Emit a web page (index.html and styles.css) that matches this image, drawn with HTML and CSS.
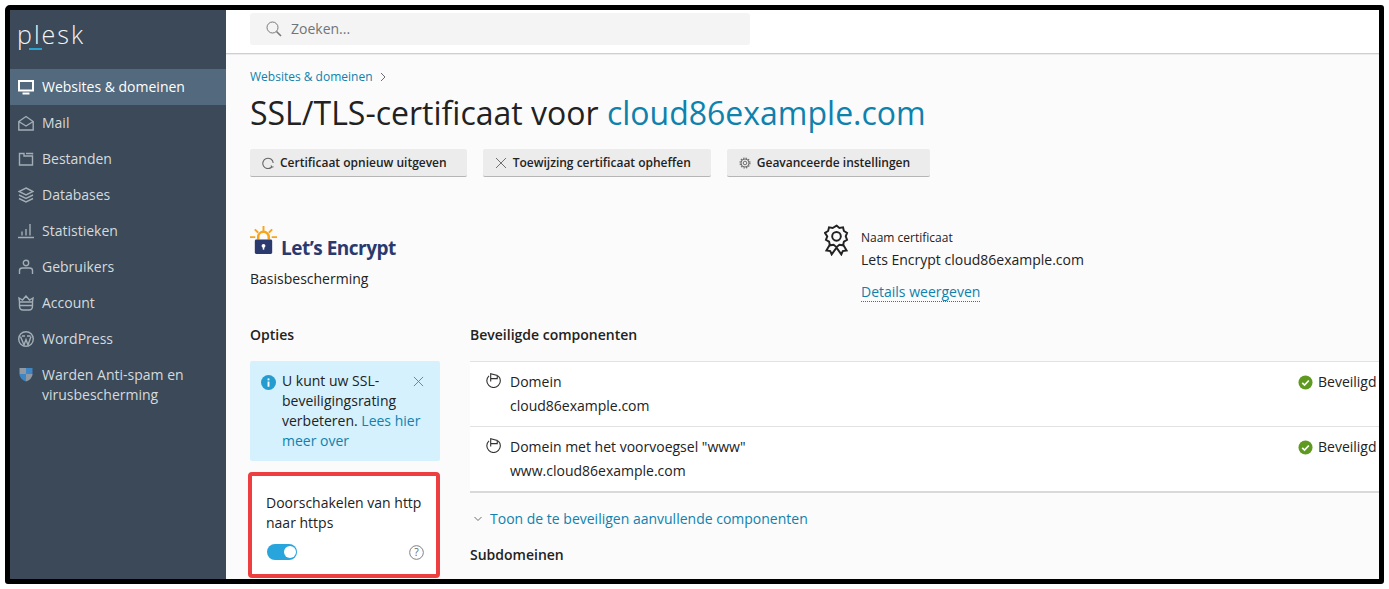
FILE: index.html
```html
<!DOCTYPE html>
<html lang="nl">
<head>
<meta charset="utf-8">
<title>SSL/TLS-certificaat</title>
<link rel="stylesheet" href="styles.css">
</head>
<body>
<div class="frame">
  <aside class="sidebar">
    <div class="logo"><span class="logo-text">plesk</span><span class="logo-bar"></span></div>
    <nav class="nav">
      <a class="nav-item active"><svg class="nav-icon" viewBox="0 0 16 16" fill="none" stroke="currentColor"><rect x="1" y="2" width="14" height="9.5" stroke-width="2"/><path d="M4.500 14.500h7" stroke-width="2"/></svg>Websites &amp; domeinen</a>
      <a class="nav-item"><svg class="nav-icon" viewBox="0 0 16 16" fill="none" stroke="currentColor"><path d="M.8 6.500 8 1.500l7.200 5V15H.8zM.8 6.500 8 11l7.200-4.500"/></svg>Mail</a>
      <a class="nav-item"><svg class="nav-icon" viewBox="0 0 16 16" fill="none" stroke="currentColor"><path d="M1.500 2.500h4.500v2.500h8.500v9h-13zM8 2.500h6.500v1"/></svg>Bestanden</a>
      <a class="nav-item"><svg class="nav-icon" viewBox="0 0 16 16" fill="none" stroke="currentColor"><path d="M8 1 15 4.500 8 8 1 4.500zM1 8l7 3.500L15 8M1 11.500 8 15l7-3.500"/></svg>Databases</a>
      <a class="nav-item"><svg class="nav-icon" viewBox="0 0 16 16" fill="none" stroke="currentColor"><path d="M0 14.500h16M4 12.500V8.500M8 12.500V6M12 12.500V1"/></svg>Statistieken</a>
      <a class="nav-item"><svg class="nav-icon" viewBox="0 0 16 16" fill="none" stroke="currentColor"><circle cx="8" cy="4" r="2.700"/><path d="M1.500 15v-3.500q0-2.500 3-2.500h7q3 0 3 2.500V15"/></svg>Gebruikers</a>
      <a class="nav-item"><svg class="nav-icon" viewBox="0 0 16 16" fill="none" stroke="currentColor"><path d="M1.500 7 1 3l3.500 2L8 1l3.500 4L15 3l-.5 4M1.500 7h13v4q0 4-3.500 4H5q-3.500 0-3.500-4zM1.500 10.500h13"/></svg>Account</a>
      <a class="nav-item"><svg class="nav-icon" viewBox="0 0 16 16" fill="none" stroke="currentColor"><circle cx="8" cy="8" r="7.300"/><path d="M2.500 5.500 6 14l2-5.500L10 14l3-8.500M4 5h3M9 5h3.500"/></svg>WordPress</a>
      <a class="nav-item"><svg class="nav-icon shield" viewBox="0 0 16 16"><path d="M1.500 2h6.500v6H1.500z" fill="#8f99a3"/><path d="M8 2h6.500v6H8z" fill="#3f86c6"/><path d="M1.500 8H8v7.500Q3 14 1.500 9z" fill="#3f86c6"/><path d="M8 8h6.500V9Q13 14 8 15.500z" fill="#8f99a3"/></svg><span>Warden Anti-spam en virusbescherming</span></a>
    </nav>
  </aside>
  <div class="content">
    <header class="topbar">
      <div class="search">
        <svg class="search-icon" viewBox="0 0 16 16" fill="none" stroke="#77797c"><circle cx="6.500" cy="6.500" r="5.500"/><path d="m10.500 10.500 4.500 4.500" stroke-width="1.600"/></svg>
        <span>Zoeken...</span>
      </div>
    </header>
    <main class="main">
      <div class="crumb"><a class="link">Websites &amp; domeinen</a><svg class="crumb-arrow" viewBox="0 0 8 10" fill="none" stroke="#6b6f73"><path d="m2 1 4 4-4 4"/></svg></div>
      <h1 class="title">SSL/TLS-certificaat voor <a class="link">cloud86example.com</a></h1>
      <div class="toolbar">
        <button class="btn"><svg class="btn-icon" viewBox="0 0 12 12" fill="none" stroke="#666"><path d="M9.800 10A5.200 5.200 0 1 1 11.200 6M9 8.500l.8 1.700 1.700-.4" stroke-width="1.100"/></svg>Certificaat opnieuw uitgeven</button>
        <button class="btn"><svg class="btn-icon" viewBox="0 0 12 12" fill="none" stroke="#707070"><path d="m1 1 10 10M11 1 1 11"/></svg>Toewijzing certificaat opheffen</button>
        <button class="btn"><svg class="btn-icon" viewBox="0 0 12 12" fill="none" stroke="#707070"><circle cx="6" cy="6" r="1.800"/><circle cx="6" cy="6" r="4"/><circle cx="6" cy="6" r="4.900" stroke-width="1.300" stroke-dasharray="1.400 1.170"/></svg>Geavanceerde instellingen</button>
      </div>
      <section class="cert">
        <div class="cert-left">
          <div class="le-logo">
            <svg class="le-icon" viewBox="0 0 28 30"><g stroke="#f9a51c" stroke-width="2" fill="none"><path d="M14 0v6M5 3.500l3.500 3.500M23 3.500 19.500 7M0 11.500h5.500M22.500 11.500H28"/><path d="M8.500 14v-2.500a5.500 5.500 0 0 1 11 0V14" stroke-width="2.600"/></g><rect x="5" y="14" width="18" height="15" rx="1.500" fill="#2a3a6e"/><circle cx="14" cy="20.500" r="2" fill="#fff"/><path d="M13.200 21h1.600v3.500h-1.600z" fill="#fff"/></svg>
            <span class="le-text">Let’s Encrypt</span>
          </div>
          <div class="le-sub">Basisbescherming</div>
        </div>
        <div class="cert-right">
          <svg class="award" viewBox="0 0 26 32" fill="none" stroke="#222" stroke-width="2"><path d="m13 1 3 2.500 3.800-.6.900 3.700 3.300 2-1.400 3.600 1.400 3.600-3.300 2-.9 3.700-3.800-.6-3 2.500-3-2.500-3.800.6-.9-3.700-3.300-2 1.400-3.600L1 8.600l3.300-2 .9-3.700 3.800.6z"/><circle cx="13" cy="12.200" r="4.500"/><path d="m6 21-3.500 6 4 .5L8 31l5-7 5 7 1.500-3.500 4-.5L20 21"/></svg>
          <div class="cert-info">
            <div class="cert-label">Naam certificaat</div>
            <div class="cert-name">Lets Encrypt cloud86example.com</div>
            <a class="link details">Details weergeven</a>
          </div>
        </div>
      </section>
      <section class="columns">
        <div class="col-left">
          <h2 class="heading">Opties</h2>
          <div class="notice">
            <svg class="info-icon" viewBox="0 0 16 16"><circle cx="8" cy="8" r="8" fill="#259ccf"/><rect x="7" y="7" width="2" height="5.500" fill="#fff"/><rect x="7" y="3.700" width="2" height="2" fill="#fff"/></svg>
            <div class="notice-text">U kunt uw SSL-beveiligingsrating verbeteren. <a class="link">Lees hier meer over</a></div>
            <svg class="notice-close" viewBox="0 0 12 12" fill="none" stroke="#707a80"><path d="m1 1 10 10M11 1 1 11"/></svg>
          </div>
          <div class="redirect">
            <div class="redirect-text">Doorschakelen van http naar https</div>
            <div class="redirect-row">
              <span class="toggle"><span class="knob"></span></span>
              <svg class="help" viewBox="0 0 16 16" fill="none" stroke="#77797c"><circle cx="8" cy="8" r="7.300"/><text x="8" y="11.500" class="help-mark">?</text></svg>
            </div>
          </div>
        </div>
        <div class="col-right">
          <h2 class="heading">Beveiligde componenten</h2>
          <div class="table">
            <div class="row">
              <svg class="flag" viewBox="0 0 16 16" fill="none" stroke="#333" stroke-width="1.200"><path d="M3.200 3A7.200 7.200 0 1 0 13 3M5 9V.8L12 2.500v3.500H5"/></svg>
              <div class="row-main"><div>Domein</div><div>cloud86example.com</div></div>
              <div class="status"><svg class="check" viewBox="0 0 16 16"><circle cx="8" cy="8" r="7.500" fill="#5d9a1f"/><path d="m4.500 8.300 2.500 2.400 4.500-4.800" fill="none" stroke="#fff" stroke-width="1.800"/></svg>Beveiligd</div>
            </div>
            <div class="row">
              <svg class="flag" viewBox="0 0 16 16" fill="none" stroke="#333" stroke-width="1.200"><path d="M3.200 3A7.200 7.200 0 1 0 13 3M5 9V.8L12 2.500v3.500H5"/></svg>
              <div class="row-main"><div>Domein met het voorvoegsel "www"</div><div>www.cloud86example.com</div></div>
              <div class="status"><svg class="check" viewBox="0 0 16 16"><circle cx="8" cy="8" r="7.500" fill="#5d9a1f"/><path d="m4.500 8.300 2.500 2.400 4.500-4.800" fill="none" stroke="#fff" stroke-width="1.800"/></svg>Beveiligd</div>
            </div>
          </div>
          <div class="more"><svg class="more-arrow" viewBox="0 0 8 6" fill="none" stroke="#6b6f73"><path d="m.5 1 3.500 3.500L7.500 1"/></svg><a class="link">Toon de te beveiligen aanvullende componenten</a></div>
          <h2 class="heading sub">Subdomeinen</h2>
        </div>
      </section>
    </main>
  </div>
</div>
</body>
</html>
```
FILE: styles.css
```css
* { box-sizing: border-box; }
html, body { margin: 0; height: 100%; }
body {
  background: #fff;
  padding: 5px;
  font-family: "Open Sans", sans-serif;
  font-size: 14px;
  line-height: 20px;
  color: #222;
  overflow: hidden;
}
.frame {
  width: 1379px;
  height: 579px;
  border: 5px solid #000;
  border-radius: 5px 3px 3px 3px;
  display: flex;
  overflow: hidden;
  background: #fbfbfb;
}
.sidebar {
  width: 216px;
  flex: none;
  background: #3b4958;
  color: #d5dade;
}
.logo {
  height: 59px;
  padding: 5px 0 0 7px;
  position: relative;
}
.logo-text {
  font-family: "Open Sans", sans-serif;
  font-weight: 300;
  font-size: 25px;
  line-height: 38px;
  letter-spacing: 2px;
  color: #f2f4f5;
}
.logo-bar {
  position: absolute;
  left: 19px;
  top: 38px;
  width: 13px;
  height: 2px;
  background: #2aa3d0;
}
.nav { display: flex; flex-direction: column; }
.nav-item {
  display: flex;
  align-items: flex-start;
  gap: 8px;
  padding: 8px 16px 8px 8px;
  min-height: 36px;
  color: #d5dade;
}
.nav-item.active { background: #53697d; color: #fff; }
.nav-icon {
  width: 16px;
  height: 16px;
  margin-top: 2px;
  flex: none;
  color: #a3adb5;
  stroke-width: 1.400;
}
.active .nav-icon { color: #fff; }
.shield { margin-top: 1px; }
.content { flex: 1; min-width: 0; display: flex; flex-direction: column; }
.topbar {
  height: 44px;
  flex: none;
  background: #fff;
  border-bottom: 1px solid #cfcfcf;
  box-shadow: 0 1px 0 #ececec;
  padding: 3px 0 0 24px;
}
.search {
  width: 500px;
  height: 32px;
  background: #f4f4f4;
  border-radius: 3px;
  display: flex;
  align-items: center;
  padding-left: 16px;
  gap: 9px;
  color: #6f7478;
}
.search-icon { width: 16px; height: 16px; }
.main { padding: 13px 0 0 24px; flex: 1; min-height: 0; }
.link { color: #0f81ad; text-decoration: none; }
.crumb {
  display: flex;
  align-items: center;
  font-size: 12px;
  line-height: 20px;
  gap: 6px;
}
.crumb-arrow { width: 8px; height: 10px; }
.title {
  margin: 4px 0 0;
  font-size: 32px;
  font-weight: 400;
  line-height: 44px;
  color: #222;
}
.toolbar { display: flex; gap: 16px; margin-top: 14px; }
.btn {
  height: 28px;
  padding: 0 20px 0 12px;
  border: 0;
  border-bottom: 1px solid #b5b5b5;
  border-radius: 2px;
  background: #ececec;
  font: 600 12px/20px "Open Sans", sans-serif;
  color: #222;
  display: flex;
  align-items: center;
  gap: 6px;
}
.btn-icon { width: 12px; height: 12px; flex: none; }
.cert { display: flex; margin-top: 46px; }
.cert-left { width: 574px; flex: none; }
.le-logo { display: flex; align-items: flex-end; height: 36px; gap: 4px; margin-top: 2px; }
.le-icon { width: 27px; height: 29px; flex: none; margin-bottom: 6px; }
.le-text {
  font-family: "Open Sans", sans-serif;
  font-weight: 700;
  font-size: 19px;
  line-height: 26px;
  letter-spacing: -.5px;
  color: #2a3a6e;
}
.le-sub { margin-top: 8px; }
.cert-right { display: flex; }
.award { width: 25px; height: 32px; flex: none; margin: 1px 12px 0 0; }
.cert-label { font-size: 12px; line-height: 20px; margin-top: 5px; }
.cert-name { margin-top: 2px; }
.details {
  display: inline-block;
  margin-top: 12px;
  line-height: 19px;
  border-bottom: 1px dotted #0f81ad;
}
.columns { display: flex; margin-top: 23px; }
.col-left { width: 190px; flex: none; }
.col-right { flex: 1; min-width: 0; margin-left: 30px; }
.heading { margin: 0; font-size: 14px; font-weight: 600; line-height: 20px; color: #222; }
.notice {
  position: relative;
  margin-top: 16px;
  height: 100px;
  background: #d4f1fd;
  border-radius: 2px;
  padding: 10px 0 0 11px;
  display: flex;
  align-items: flex-start;
  gap: 6px;
}
.info-icon { width: 15px; height: 15px; flex: none; margin-top: 4px; }
.notice-text { width: 142px; flex: none; }
.notice-close { position: absolute; right: 16px; top: 15px; width: 11px; height: 11px; }
.redirect {
  margin: 11px 0 0 -2px;
  height: 106px;
  background: #fff;
  border: 4px solid #ed3f3f;
  border-radius: 4px;
  padding: 17px 12px 0 14px;
}
.redirect-text { width: 164px; }
.redirect-row { display: flex; justify-content: space-between; align-items: center; margin-top: 10px; padding-left: 1px; }
.toggle {
  width: 30px;
  height: 16px;
  border-radius: 8px;
  background: #28a5dc;
  display: flex;
  justify-content: flex-end;
  padding: 2px 1px 2px 0;
}
.knob { width: 12px; height: 12px; border-radius: 50%; background: #fff; }
.help { width: 15px; height: 15px; margin-top: 2px; }
.help-mark { font: 400 11px "Open Sans", sans-serif; text-anchor: middle; fill: #5f6265; stroke: none; }
.table {
  margin-top: 16px;
  background: #fff;
  border-top: 1px solid #e2e2e2;
  border-bottom: 2px solid #d9d9d9;
}
.row {
  display: flex;
  height: 64px;
  padding: 8px 0 0 16px;
  line-height: 24px;
}
.row + .row { border-top: 1px solid #e2e2e2; height: 65px; }
.flag { width: 15px; height: 15px; flex: none; margin: 3px 9px 0 0; }
.row-main { flex: 1; }
.status { display: flex; align-items: flex-start; gap: 5px; width: 80px; flex: none; white-space: nowrap; margin-right: 1px; }
.check { width: 15px; height: 15px; flex: none; margin-top: 5px; }
.more { display: flex; align-items: center; gap: 8px; margin-top: 16px; padding-left: 4px; }
.more-arrow { width: 8px; height: 6px; }
.sub { margin-top: 16px; }
```
